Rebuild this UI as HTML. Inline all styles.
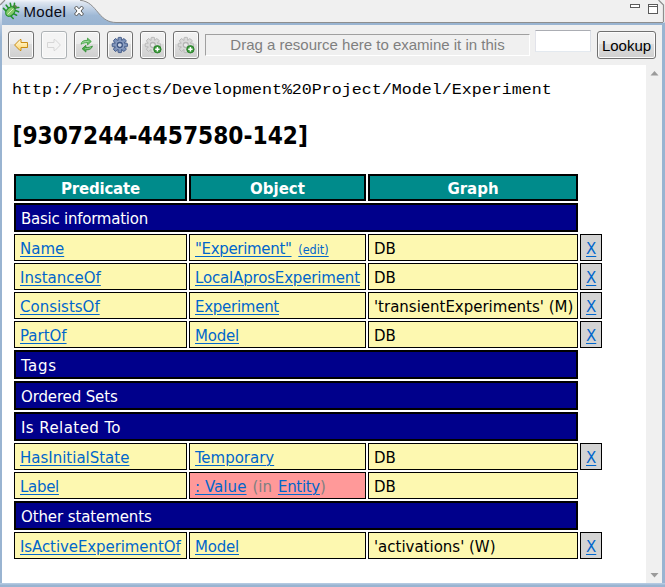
<!DOCTYPE html>
<html>
<head>
<meta charset="utf-8">
<title>Model</title>
<style>
html,body{margin:0;padding:0;}
body{width:665px;height:587px;overflow:hidden;background:#f0f0f0;position:relative;
 font-family:"DejaVu Sans Condensed","Liberation Sans",sans-serif;font-size:16.67px;color:#000;}
#frame{position:absolute;left:0;top:0;width:665px;height:587px;overflow:hidden;background:#f0f0f0;}
.abs{position:absolute;}
/* chrome */
#bandL{left:0;top:25px;width:2px;height:562px;background:linear-gradient(#b4c7de 0,#99b4d1 12px,#99b4d1 100%);}
#bandR{left:662px;top:23px;width:3px;height:564px;background:#99b4d1;}
#bandT{left:0;top:23px;width:665px;height:2px;background:#99b4d1;}
#bandB{left:0;top:583px;width:665px;height:4px;background:linear-gradient(#b4c9e1 0,#b4c9e1 25%,#99b4d1 50%,#99b4d1 100%);}
#toolbar{left:2px;top:25px;width:660px;height:40px;background:#f0f0f0;}
#content{left:2px;top:65px;width:644px;height:518px;background:#fff;}
#scroll{left:646px;top:65px;width:16px;height:518px;background:#f0f0f0;}
.ui{font-family:"Liberation Sans",sans-serif;font-size:15px;}
#tabtxt{left:23.4px;top:3px;line-height:18px;color:#0a0a14;letter-spacing:0.4px;}
.btn{top:31px;width:24px;height:26px;border:1px solid #707070;border-radius:3px;
 background:linear-gradient(#f2f2f2 0,#ebebeb 47%,#dddddd 48%,#cfcfcf 100%);box-shadow:inset 0 0 0 1px #fcfcfc;}
.btn.dis{border-color:#adb2b5;background:#f4f4f4;}
.btn svg{position:absolute;left:-1px;top:-1px;}
#drag{left:205px;top:34px;width:323px;height:20px;border:1px solid;border-color:#a0a0a0 #fff #fff #a0a0a0;
 color:#7f7f7f;text-align:center;line-height:20px;white-space:nowrap;}
#inp{left:535px;top:30px;width:54px;height:20px;background:#fff;border:1px solid;border-color:#abadb3 #dbdfe6 #e3e9ef #e2e3ea;}
#lookup{left:597px;top:31px;width:57px;height:26px;border:1px solid #707070;border-radius:3px;
 background:linear-gradient(#f2f2f2 0,#ebebeb 47%,#dddddd 48%,#cfcfcf 100%);box-shadow:inset 0 0 0 1px #fcfcfc;
 text-align:center;line-height:27px;color:#000;}
/* document */
#url{left:12px;top:80px;font-family:"Liberation Mono",monospace;font-size:16.67px;line-height:20px;white-space:pre;transform:scaleY(0.87);transform-origin:0 15px;}
#h2{left:12.5px;top:121px;font-weight:bold;font-size:24.2px;line-height:30px;white-space:pre;}
.c{position:absolute;box-sizing:border-box;white-space:nowrap;overflow:hidden;padding:0 5px;}
.h{height:27px;border:2px solid #000;background:#008b8b;color:#fff;font-weight:bold;text-align:center;line-height:25px;}
.s{height:29px;border:2px solid #000;background:#00008b;color:#fff;line-height:27px;left:14px;width:564px;}
.d{height:27px;border:1px solid #000;background:#fdf8b0;line-height:27px;}
.x{height:27px;border:1px solid #000;background:#d3d3d3;line-height:27px;left:580px;width:22px;}
.p{background:#ff9999;color:#808080;}
.c1{left:14px;width:173px;}
.c2{left:189px;width:177px;}
.c3{left:368px;width:210px;}
a{color:#0066cc;text-decoration:underline;text-decoration-thickness:1px;text-underline-offset:1.5px;}
small{font-size:12.5px;margin-left:2px;}
</style>
</head>
<body>
<div id="frame">
  <!-- tab strip -->
  <svg class="abs" style="left:0;top:0" width="665" height="25" viewBox="0 0 665 25">
    <defs>
      <linearGradient id="tg" x1="0" y1="0" x2="0" y2="1">
        <stop offset="0" stop-color="#f1f4f9"/>
        <stop offset="0.1" stop-color="#dde5f0"/>
        <stop offset="0.4" stop-color="#b9cbe1"/>
        <stop offset="0.62" stop-color="#9eb8d5"/>
        <stop offset="1" stop-color="#99b4d1"/>
      </linearGradient>
      <linearGradient id="lg" x1="0" y1="0" x2="0" y2="1">
        <stop offset="0" stop-color="#eef2f8"/>
        <stop offset="0.6" stop-color="#d3deec"/>
        <stop offset="1" stop-color="#b4c7de"/>
      </linearGradient>
    </defs>
    <rect x="0" y="0" width="665" height="25" fill="#f0f0f0"/>
    <path d="M0,25 L0,4 L4,0 L80,0 C89,1 93.5,7 98.5,13 C104,19.5 108.5,22.3 116,22.5 L665,22.5 L665,25 Z" fill="url(#tg)"/>
    <rect x="115" y="23" width="550" height="2" fill="#99b4d1"/>
    <rect x="0" y="5" width="2" height="20" fill="url(#lg)"/>
    <path d="M0,5 L5,0" stroke="#8c8c8c" stroke-width="1.2" fill="none"/>
    <path d="M80,0.3 C89,1 93.5,7 98.5,13 C104,19.5 108.5,22.3 116,22.5 L663,22.5" stroke="#8e8e8e" stroke-width="1" fill="none"/>
    <path d="M658.5,0 L663.5,5 L663.5,22" stroke="#8e8e8e" stroke-width="1.2" fill="none"/>
    <!-- min / max -->
    <rect x="630.5" y="4.5" width="9" height="3" fill="#fff" stroke="#5a5a5a"/>
    <rect x="648.5" y="4.5" width="9" height="9" fill="#fff" stroke="#5a5a5a"/>
    <rect x="648" y="6" width="10" height="1" fill="#5a5a5a"/>
    <!-- close x -->
    <path d="M74.5,8 L76.5,6 L79,8.8 L81.5,6 L83.5,8 L81,11 L83.5,14 L81.5,16 L79,13.2 L76.5,16 L74.5,14 L77,11 Z" fill="#fff" stroke="#555" stroke-width="1"/>
    <!-- bug icon -->
    <g>
      <g stroke="#23932b" stroke-width="1.6" stroke-linecap="round" fill="none">
        <path d="M6.5,11.5 L3.5,8.4"/><path d="M8.5,8 L6.2,5.2"/><path d="M11,6.5 L10.3,3.4"/><path d="M14.3,5.5 L14.5,3.4"/>
        <path d="M16,7.6 L18.8,7.5"/><path d="M15.5,10.6 L18.6,11.8"/><path d="M13.5,13.6 L16.6,15.2"/><path d="M10.8,16 L13.2,18.5"/>
      </g>
      <circle cx="14.4" cy="7.3" r="2.3" fill="#4a8a3a"/>
      <circle cx="15.6" cy="6.4" r="1" fill="#6f6a58"/>
      <ellipse cx="10.4" cy="11.6" rx="4.5" ry="6" transform="rotate(45 10.4 11.6)" fill="#23932b"/>
      <ellipse cx="10.4" cy="11.6" rx="3.2" ry="4.7" transform="rotate(45 10.4 11.6)" fill="#86c96c"/>
      <path d="M7.6,14.4 L13.2,8.8" stroke="#d4efc4" stroke-width="1"/>
    </g>
  </svg>
  <div id="tabtxt" class="abs ui">Model</div>

  <div id="bandL" class="abs"></div>
  <div id="bandR" class="abs"></div>
  <div id="toolbar" class="abs"></div>
  <div id="content" class="abs"></div>
  <div id="scroll" class="abs">
    <svg width="16" height="518" viewBox="0 0 16 518" style="position:absolute;left:0;top:0">
      <path d="M4.5,10.5 L8.5,6 L12.5,10.5 Z" fill="#9a9a9a"/>
      <path d="M4.5,508 L12.5,508 L8.5,512.5 Z" fill="#9a9a9a"/>
    </svg>
  </div>
  <div id="bandB" class="abs"></div>

  <!-- toolbar buttons -->
  <div class="abs btn" style="left:8px">
    <svg width="26" height="28" viewBox="0 0 26 28">
      <defs><linearGradient id="ag" x1="0" y1="0" x2="0" y2="1"><stop offset="0" stop-color="#fffbe0"/><stop offset="1" stop-color="#ffd56a"/></linearGradient></defs>
      <path d="M6.6,14 L12,8.5 L13,8.5 L13,11.5 L19.5,11.5 L19.5,16.5 L13,16.5 L13,19.5 L12,19.5 Z" fill="url(#ag)" stroke="#c98b14" stroke-width="1" stroke-linejoin="round"/>
    </svg>
  </div>
  <div class="abs btn dis" style="left:41px">
    <svg width="26" height="28" viewBox="0 0 26 28">
      <path d="M19.4,14 L14,8.5 L13,8.5 L13,11.5 L6.5,11.5 L6.5,16.5 L13,16.5 L13,19.5 L14,19.5 Z" fill="#f4f4f4" stroke="#d6d6d6" stroke-width="1" stroke-linejoin="round"/>
    </svg>
  </div>
  <div class="abs btn" style="left:74px">
    <svg width="26" height="28" viewBox="0 0 26 28">
      <path d="M7,13.2 C7.5,10.3 10,9.3 13.5,9.3 L13.5,7.1 L17.3,10.5 L13.5,13.9 L13.5,11.7 C11,11.7 9,12 7,13.2 Z" fill="#6cc06c" stroke="#3c9c3c" stroke-width="0.8" stroke-linejoin="round"/>
      <path d="M18.4,15 C17.9,17.9 15.4,18.9 11.9,18.9 L11.9,21.1 L8.1,17.7 L11.9,14.3 L11.9,16.5 C14.4,16.5 16.4,16.2 18.4,15 Z" fill="#4aa84a" stroke="#2f8a2f" stroke-width="0.8" stroke-linejoin="round"/>
      <path d="M8.2,12 C9.5,10.7 11.5,10.5 14.5,10.5" stroke="#b5e3b5" stroke-width="0.8" fill="none"/>
      <path d="M17.2,16.2 C15.9,17.5 13.9,17.7 10.9,17.7" stroke="#9ad49a" stroke-width="0.8" fill="none"/>
    </svg>
  </div>
  <div class="abs btn" style="left:107px">
    <svg width="26" height="28" viewBox="0 0 26 28">
      <g transform="translate(12.8,14)">
        <g fill="#7b91b8" stroke="#3a5282" stroke-width="0.9" stroke-linejoin="round">
          <rect x="-1.8" y="-7.6" width="3.6" height="15.2" rx="0.7"/>
          <rect x="-1.8" y="-7.6" width="3.6" height="15.2" rx="0.7" transform="rotate(45)"/>
          <rect x="-1.8" y="-7.6" width="3.6" height="15.2" rx="0.7" transform="rotate(90)"/>
          <rect x="-1.8" y="-7.6" width="3.6" height="15.2" rx="0.7" transform="rotate(135)"/>
        </g>
        <circle r="4.7" fill="#8a9dc0"/>
        <circle r="2.5" fill="#c9d2e2" stroke="#3d5583" stroke-width="1.3"/>
      </g>
    </svg>
  </div>
  <div class="abs btn" style="left:140px">
    <svg width="26" height="28" viewBox="0 0 26 28">
      <g transform="translate(12.8,14)">
        <g fill="#d9d9d9" stroke="#b4b4b4" stroke-width="0.9" stroke-linejoin="round">
          <rect x="-1.8" y="-7.6" width="3.6" height="15.2" rx="0.7"/>
          <rect x="-1.8" y="-7.6" width="3.6" height="15.2" rx="0.7" transform="rotate(45)"/>
          <rect x="-1.8" y="-7.6" width="3.6" height="15.2" rx="0.7" transform="rotate(90)"/>
          <rect x="-1.8" y="-7.6" width="3.6" height="15.2" rx="0.7" transform="rotate(135)"/>
        </g>
        <circle r="4.7" fill="#dcdcdc"/>
        <circle r="2.5" fill="#ebebeb" stroke="#b6b6b6" stroke-width="1.3"/>
      </g>
      <circle cx="17.4" cy="18.3" r="3.7" fill="#3d9a3d" stroke="#1f7a1f" stroke-width="0.8"/>
      <path d="M15.2,18.3 H19.6 M17.4,16.1 V20.5" stroke="#fff" stroke-width="1.5"/>
    </svg>
  </div>
  <div class="abs btn" style="left:173px">
    <svg width="26" height="28" viewBox="0 0 26 28">
      <g transform="translate(12.8,14)">
        <g fill="#d9d9d9" stroke="#b4b4b4" stroke-width="0.9" stroke-linejoin="round">
          <rect x="-1.8" y="-7.6" width="3.6" height="15.2" rx="0.7"/>
          <rect x="-1.8" y="-7.6" width="3.6" height="15.2" rx="0.7" transform="rotate(45)"/>
          <rect x="-1.8" y="-7.6" width="3.6" height="15.2" rx="0.7" transform="rotate(90)"/>
          <rect x="-1.8" y="-7.6" width="3.6" height="15.2" rx="0.7" transform="rotate(135)"/>
        </g>
        <circle r="4.7" fill="#dcdcdc"/>
        <circle r="2.5" fill="#ebebeb" stroke="#b6b6b6" stroke-width="1.3"/>
      </g>
      <circle cx="17.4" cy="18.3" r="3.7" fill="#3d9a3d" stroke="#1f7a1f" stroke-width="0.8"/>
      <path d="M15.2,18.3 H19.6 M17.4,16.1 V20.5" stroke="#fff" stroke-width="1.5"/>
    </svg>
  </div>
  <div id="drag" class="abs ui">Drag a resource here to examine it in this</div>
  <div id="inp" class="abs"></div>
  <div id="lookup" class="abs ui">Lookup</div>

  <!-- document -->
  <div id="url" class="abs">http://Projects/Development%20Project/Model/Experiment</div>
  <div id="h2" class="abs">[9307244-4457580-142]</div>

  <div class="c h c1" style="top:174px;letter-spacing:-0.2px">Predicate</div>
  <div class="c h c2" style="top:174px">Object</div>
  <div class="c h c3" style="top:174px">Graph</div>

  <div class="c s" style="top:203px;letter-spacing:-0.23px">Basic information</div>

  <div class="c d c1" style="top:234px"><a>Name</a></div>
  <div class="c d c2" style="top:234px"><a style="letter-spacing:-0.32px">"Experiment"</a> <small><a>(edit)</a></small></div>
  <div class="c d c3" style="top:234px">DB</div>
  <div class="c x" style="top:234px"><a>X</a></div>

  <div class="c d c1" style="top:263px"><a>InstanceOf</a></div>
  <div class="c d c2" style="top:263px"><a style="letter-spacing:-0.15px">LocalAprosExperiment</a></div>
  <div class="c d c3" style="top:263px">DB</div>
  <div class="c x" style="top:263px"><a>X</a></div>

  <div class="c d c1" style="top:292px"><a>ConsistsOf</a></div>
  <div class="c d c2" style="top:292px"><a style="letter-spacing:-0.26px">Experiment</a></div>
  <div class="c d c3" style="top:292px">'transientExperiments' (M)</div>
  <div class="c x" style="top:292px"><a>X</a></div>

  <div class="c d c1" style="top:321px"><a>PartOf</a></div>
  <div class="c d c2" style="top:321px"><a style="letter-spacing:-0.2px">Model</a></div>
  <div class="c d c3" style="top:321px">DB</div>
  <div class="c x" style="top:321px"><a>X</a></div>

  <div class="c s" style="top:350px;letter-spacing:0.7px">Tags</div>
  <div class="c s" style="top:381px;letter-spacing:-0.12px">Ordered Sets</div>
  <div class="c s" style="top:412px;letter-spacing:0.45px">Is Related To</div>

  <div class="c d c1" style="top:443px"><a>HasInitialState</a></div>
  <div class="c d c2" style="top:443px"><a>Temporary</a></div>
  <div class="c d c3" style="top:443px">DB</div>
  <div class="c x" style="top:443px"><a>X</a></div>

  <div class="c d c1" style="top:472px"><a style="letter-spacing:-0.3px">Label</a></div>
  <div class="c d c2 p" style="top:472px"><a style="letter-spacing:0.1px">: Value</a><span style="word-spacing:1.2px"> (in </span><a style="letter-spacing:-0.3px">Entity</a>)</div>
  <div class="c d c3" style="top:472px">DB</div>

  <div class="c s" style="top:501px;letter-spacing:-0.1px">Other statements</div>

  <div class="c d c1" style="top:532px"><a style="letter-spacing:-0.08px">IsActiveExperimentOf</a></div>
  <div class="c d c2" style="top:532px"><a style="letter-spacing:-0.2px">Model</a></div>
  <div class="c d c3" style="top:532px">'activations' (W)</div>
  <div class="c x" style="top:532px"><a>X</a></div>
</div>
</body>
</html>
